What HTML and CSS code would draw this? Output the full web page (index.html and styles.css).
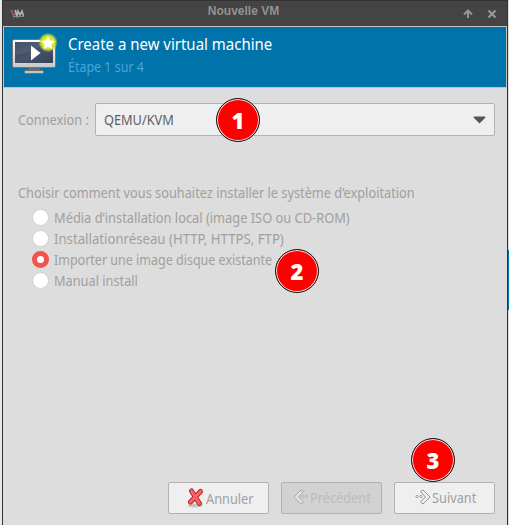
FILE: index.html
```html
<!DOCTYPE html>
<html lang="fr">
<head>
<meta charset="utf-8">
<title>Nouvelle VM</title>
<link rel="stylesheet" href="styles.css">
</head>
<body>
<div class="window">
  <div class="titlebar">
    <svg class="logo" width="15" height="9" viewBox="0 0 15 9"><path d="M1 1l3 6 3-6" fill="none" stroke="#8c5962" stroke-width="2"/><path d="M5 1l2 6 1-5 2 4 2-4 1.500 5" fill="none" stroke="#b5b5b5" stroke-width="1.500"/><path d="M3 7.500h11" stroke="#888"/></svg>
    <span class="title">Nouvelle VM</span>
    <svg class="controls" width="34" height="10" viewBox="0 0 34 10"><path d="M5 9V2M1 5.500L5 1.500l4 4" fill="none" stroke="#969696" stroke-width="2"/><path d="M25.500 1.500l7 7M32.500 1.500l-7 7" stroke="#969696" stroke-width="2.200"/></svg>
  </div>
  <div class="banner">
    <svg class="monitor" width="48" height="44" viewBox="0 0 48 44">
      <defs>
        <linearGradient id="bezel" x2="0" y2="1"><stop stop-color="#fff"/><stop offset="1" stop-color="#c9cac7"/></linearGradient>
        <linearGradient id="screen" x2="1" y2="1"><stop stop-color="#34445b"/><stop offset=".5" stop-color="#46536a"/><stop offset="1" stop-color="#364359"/></linearGradient>
        <radialGradient id="glow"><stop offset=".5" stop-color="#e5ed25"/><stop offset=".7" stop-color="#c9dc31"/><stop offset="1" stop-color="#c9dc31" stop-opacity="0"/></radialGradient>
      </defs>
      <path d="M18 34h10l1 4H17z" fill="#686b6b"/><rect x="13.500" y="38.500" width="19" height="3" rx="1" fill="#c5c6c3" stroke="#6d7477"/>
      <rect x="1.500" y="7.500" width="43" height="28" rx="1.500" fill="url(#bezel)" stroke="#73777a"/>
      <rect x="4" y="10" width="38" height="21" fill="url(#screen)"/>
      <path d="M4 10h30q-8 9-30 13z" fill="#fff" opacity=".08"/>
      <path d="M20 13.500v15l9.500-7.500z" fill="#fff"/>
      <circle cx="37" cy="10.500" r="9.800" fill="url(#glow)"/>
      <path d="M37 4l2 4.500 5 .5-3.700 3.300 1.100 4.900L37 14.700l-4.400 2.500 1.100-4.900L30 9l5-.5z" fill="#fff"/>
    </svg>
    <div class="heading"><div class="t1"><span>Create a new virtual machine</span></div><div class="t2"><span>Étape 1 sur 4</span></div></div>
  </div>
  <div class="content">
    <div class="connection">
      <div class="label"><span>Connexion :</span></div>
      <div class="select"><span>QEMU/KVM</span><svg width="13" height="8" viewBox="0 0 13 8"><path d="M.5 1.500Q.5.500 1.500.5h10q1 0 1 1l-6 6z" fill="#555"/></svg></div>
    </div>
    <div class="question"><span>Choisir comment vous souhaitez installer le système d’exploitation</span></div>
    <div class="options">
      <div class="option"><i class="radio"></i><span class="o1">Média d’installation local (image ISO ou CD-ROM)</span></div>
      <div class="option"><i class="radio"></i><span class="o2">Installationréseau (HTTP, HTTPS, FTP)</span></div>
      <div class="option"><i class="radio on"></i><span class="o3">Importer une image disque existante</span></div>
      <div class="option"><i class="radio"></i><span class="o4">Manual install</span></div>
    </div>
    <div class="actions">
      <div class="button cancel"><svg width="18" height="20" viewBox="0 0 18 20"><ellipse cx="8" cy="17.500" rx="7.500" ry="1.800" fill="#c4c4c4"/><path d="M4.500 3l8 12.500M13.500 3.500L3.500 14" stroke="#b81c20" stroke-width="5" stroke-linecap="round"/><path d="M4.500 3l8 12.500M13.500 3.500L3.500 14" stroke="#f2666b" stroke-width="3.200" stroke-linecap="round"/></svg><span>Annuler</span></div>
      <div class="button back"><svg width="16" height="16" viewBox="0 0 16 16"><path d="M8 1l2.500 1.500-5 5.500 5 5L8 15 1 8z" fill="#e3e3e3" stroke="#a9a9a9" stroke-linejoin="round"/><circle cx="9.500" cy="7.500" r="1.200" fill="#ddd" stroke="#aaa" stroke-width=".8"/><circle cx="13.500" cy="7.500" r="1.200" fill="#ddd" stroke="#aaa" stroke-width=".8"/></svg><span>Précédent</span></div>
      <div class="button next"><svg width="16" height="16" viewBox="0 0 16 16"><path d="M8 1L5.500 2.500l5 5.500-5 5L8 15l7-7z" fill="#f1f1ef" stroke="#90918b" stroke-linejoin="round"/><circle cx="2" cy="7.500" r="1.200" fill="#eee" stroke="#90918b" stroke-width=".8"/><circle cx="6" cy="7.500" r="1.200" fill="#eee" stroke="#90918b" stroke-width=".8"/></svg><span>Suivant</span></div>
    </div>
  </div>
</div>
<div class="backdrop"></div>
<div class="badge one">1</div>
<div class="badge two">2</div>
<div class="badge three">3</div>
</body>
</html>
```
FILE: styles.css
```css
* { box-sizing: border-box; }
body { margin: 0; width: 509px; height: 525px; display: flex; padding-left: 2px; overflow: hidden; position: relative; background: #e8e8e8; font: 14px/20px "Noto Sans", sans-serif; color: #a0a0a0; white-space: nowrap; }
.window { width: 506px; height: 525px; background: #ddd; border: solid #333; border-width: 1px 1px 0; display: flex; flex-direction: column; }
.titlebar { height: 25px; background: #444; display: flex; align-items: center; justify-content: space-between; padding: 0 10px 0 7px; }
.title { font: bold 12px/20px "Liberation Sans", sans-serif; color: #929292; margin: -5px 0 0 -1px; }
.banner { height: 62px; background: #0073aa; border: 1px solid #c5c1bd; display: flex; padding: 5px 0 0 7px; color: #fff; }
.banner span, .content span { display: inline-block; transform: scaleX(.911); transform-origin: left; }
.heading { padding: 1px 0 0 9px; }
.t1 { font-size: 16px; line-height: 22px; }
.banner .t1 span { transform: scaleX(.936); }
.t2 { color: #45a5df; margin-top: 3px; line-height: 18px; }
.banner .t2 span { transform: scaleX(.89); }
.content { flex: 1; padding: 15px 12px 11px 15px; display: flex; flex-direction: column; }
.connection { display: flex; align-items: center; height: 33px; }
.label { width: 77px; padding-top: 1px; }
.select { flex: 1; height: 33px; border: 1px solid #b2b2b2; border-radius: 2px; background: #efefef; color: #606060; display: flex; align-items: center; justify-content: space-between; padding: 1px 8px 0; }
.question { margin-top: 47px; }
.options { margin: 4px 0 0 14px; }
.option { height: 21px; display: flex; align-items: center; gap: 5px; }
.content .o1 { transform: scaleX(.917); }
.content .o2 { transform: scaleX(.942); }
.content .o3 { transform: scaleX(.893); }
.radio { width: 17px; height: 17px; flex: none; border: 1px solid #d0d0d0; border-radius: 50%; background: #fff; }
.radio.on { border: 5px solid #f0544c; }
.actions { margin-top: auto; display: flex; justify-content: flex-end; gap: 12px; }
.button { width: 101px; height: 32px; border: 1px solid #b2b2b2; border-radius: 2px; background: #efefef; display: flex; align-items: center; gap: 1px; overflow: hidden; }
.button svg { flex: none; margin-top: -2px; }
.cancel { padding: 2px 0 0 18px; }
.back { padding-left: 11px; background: #d2d2d2; color: #bcbcbc; }
.next { padding-left: 20px; }
.backdrop { width: 1px; height: 525px; background: linear-gradient(#ddd 250px, #0073aa 250px 310px, #ddd 310px); }
.badge { position: absolute; width: 44px; height: 44px; border-radius: 50%; background: #f00; border: 1px solid #151515; box-shadow: inset 0 0 0 1px #eee, 0 0 1px #fff; color: #fff; font: 900 22px/42px "Noto Sans", sans-serif; text-align: center; }
.one { left: 216px; top: 98px; }
.two { left: 275px; top: 249px; }
.three { left: 411px; top: 438px; }
```
